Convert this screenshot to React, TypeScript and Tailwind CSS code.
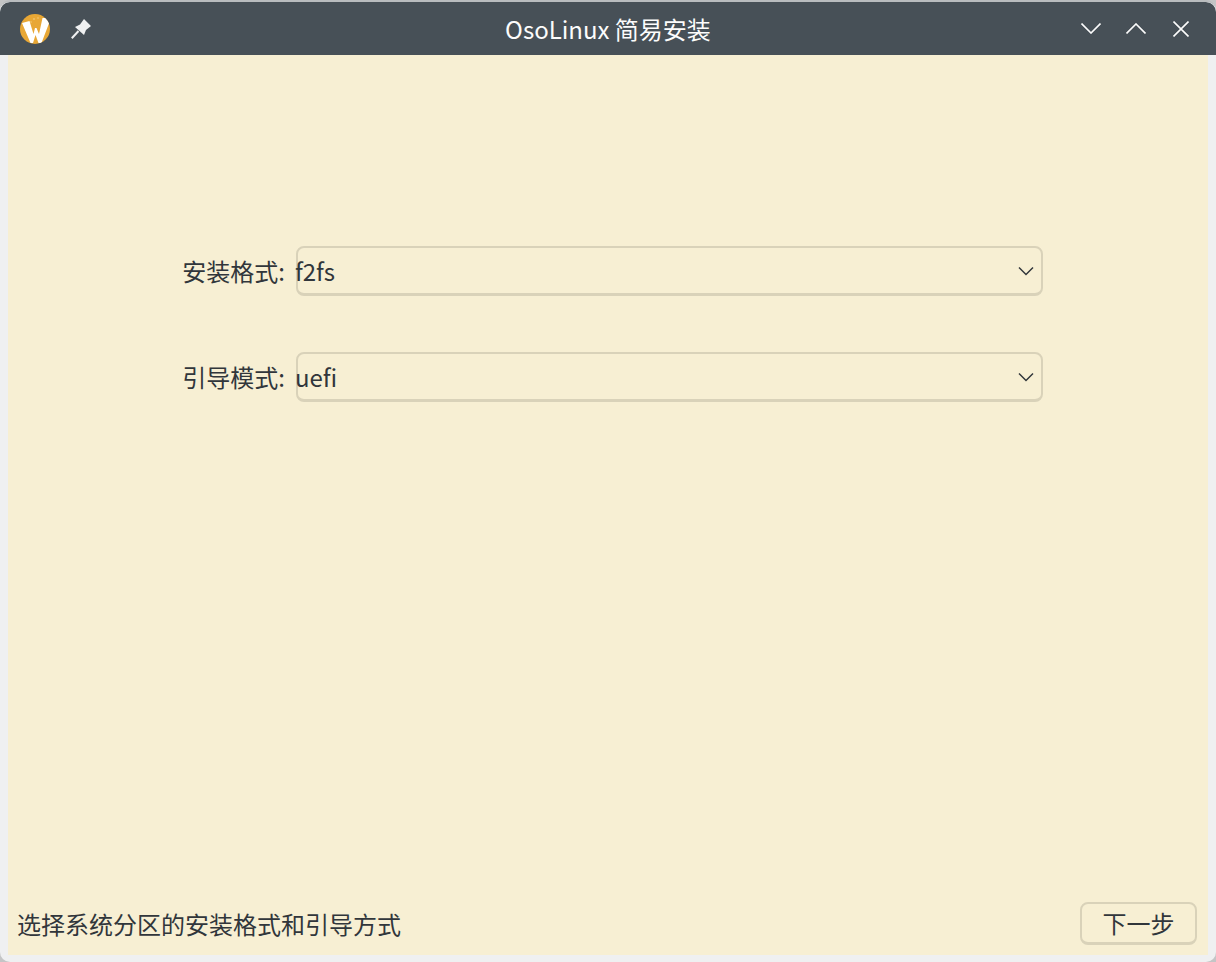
import React from 'react';

const font = "font-['Noto_Sans_CJK_SC','Noto_Sans',sans-serif]";

const Logo = () => (
  <svg width="30" height="30" viewBox="0 0 30 30">
    <clipPath id="logo-clip">
      <circle cx="15" cy="15" r="15" />
    </clipPath>
    <circle cx="15" cy="15" r="15" fill="#e8a735" />
    <circle cx="14" cy="5" r="0.8" fill="#f6d58f" />
    <circle cx="18" cy="4" r="0.7" fill="#f6d58f" />
    <circle cx="11" cy="8" r="0.7" fill="#f6d58f" />
    <path
      d="M2 9 L9.5 7 L13.5 20 L15 14 L16.5 14 L19 20 L22.5 4 L31 4 L21.5 29 L18.5 29 L15.5 21 L13 29 L10.5 29 Z"
      fill="#ffffff"
      clipPath="url(#logo-clip)"
    />
  </svg>
);

const Pin = () => (
  <svg width="20" height="20" viewBox="0 0 20 20">
    <path d="M13 0 L20 7 L15 11 L13 16 L4 8 L9 5.5 Z" fill="#eff0f1" />
    <path d="M7.5 12 L0.8 19.2" stroke="#eff0f1" strokeWidth="2" />
  </svg>
);

const Chevron = ({ up = false }: { up?: boolean }) => (
  <svg width="20" height="11" viewBox="0 0 20 11" fill="none" stroke="#fcfcfc" strokeWidth="1.6">
    <path d={up ? 'M0.5 10.5 L10 1 L19.5 10.5' : 'M0.5 0.5 L10 10 L19.5 0.5'} />
  </svg>
);

const Close = () => (
  <svg width="16" height="16" viewBox="0 0 16 16" fill="none" stroke="#fcfcfc" strokeWidth="1.6">
    <path d="M0.5 0.5 L15.5 15.5 M15.5 0.5 L0.5 15.5" />
  </svg>
);

const ComboRow = ({ label, value }: { label: string; value: string }) => (
  <div className="flex items-center h-[50px]">
    <div className="w-[288px] pr-[11px] text-right text-[24px] leading-[50px] text-[#31363b]">{label}</div>
    <div className="w-[747px] h-[50px] flex items-center justify-between rounded-[8px] border-2 border-[#d9d2b9] border-b-[3px] pr-[7px] text-[24px] text-[#31363b]">
      <span className="-ml-[3px]">{value}</span>
      <svg width="16" height="10" viewBox="0 0 16 10" fill="none" stroke="#31363b" strokeWidth="1.5">
        <path d="M1 1.5 L8 8.5 L15 1.5" />
      </svg>
    </div>
  </div>
);

export default function App() {
  return (
    <div className="w-[1216px] h-[962px] bg-[#c4c5c6]">
      <div className={`${font} w-full h-full bg-[#eff0f1] flex flex-col overflow-hidden rounded-[10px] border-t-2 border-[#b9bcbe]`}>
        <div className="h-[53px] shrink-0 bg-[#475057] flex items-center justify-between pl-[20px] pr-[27px] rounded-t-[10px] relative">
          <div className="flex items-center gap-[21px]">
            <Logo />
            <Pin />
          </div>
          <div className="absolute left-0 right-0 text-center text-[24px] leading-[53px] text-[#fcfcfc] pointer-events-none">
            OsoLinux 简易安装
          </div>
          <div className="flex items-center gap-[25px]">
            <Chevron />
            <Chevron up />
            <div className="ml-[2px]">
              <Close />
            </div>
          </div>
        </div>
        <div className="flex-1 mx-[8px] mb-[7px] bg-[#f7efd3] flex flex-col">
          <div className="flex flex-col gap-[56px] pt-[191px] flex-1">
            <ComboRow label="安装格式:" value="f2fs" />
            <ComboRow label="引导模式:" value="uefi" />
          </div>
          <div className="flex items-center justify-between pl-[9px] pr-[11px] pb-[10px]">
            <div className="text-[24px] text-[#31363b]">选择系统分区的安装格式和引导方式</div>
            <button className="w-[117px] h-[43px] rounded-[8px] border-2 border-[#d9d2b9] border-b-[3px] text-[24px] leading-none text-[#31363b]">
              下一步
            </button>
          </div>
        </div>
      </div>
    </div>
  );
}
